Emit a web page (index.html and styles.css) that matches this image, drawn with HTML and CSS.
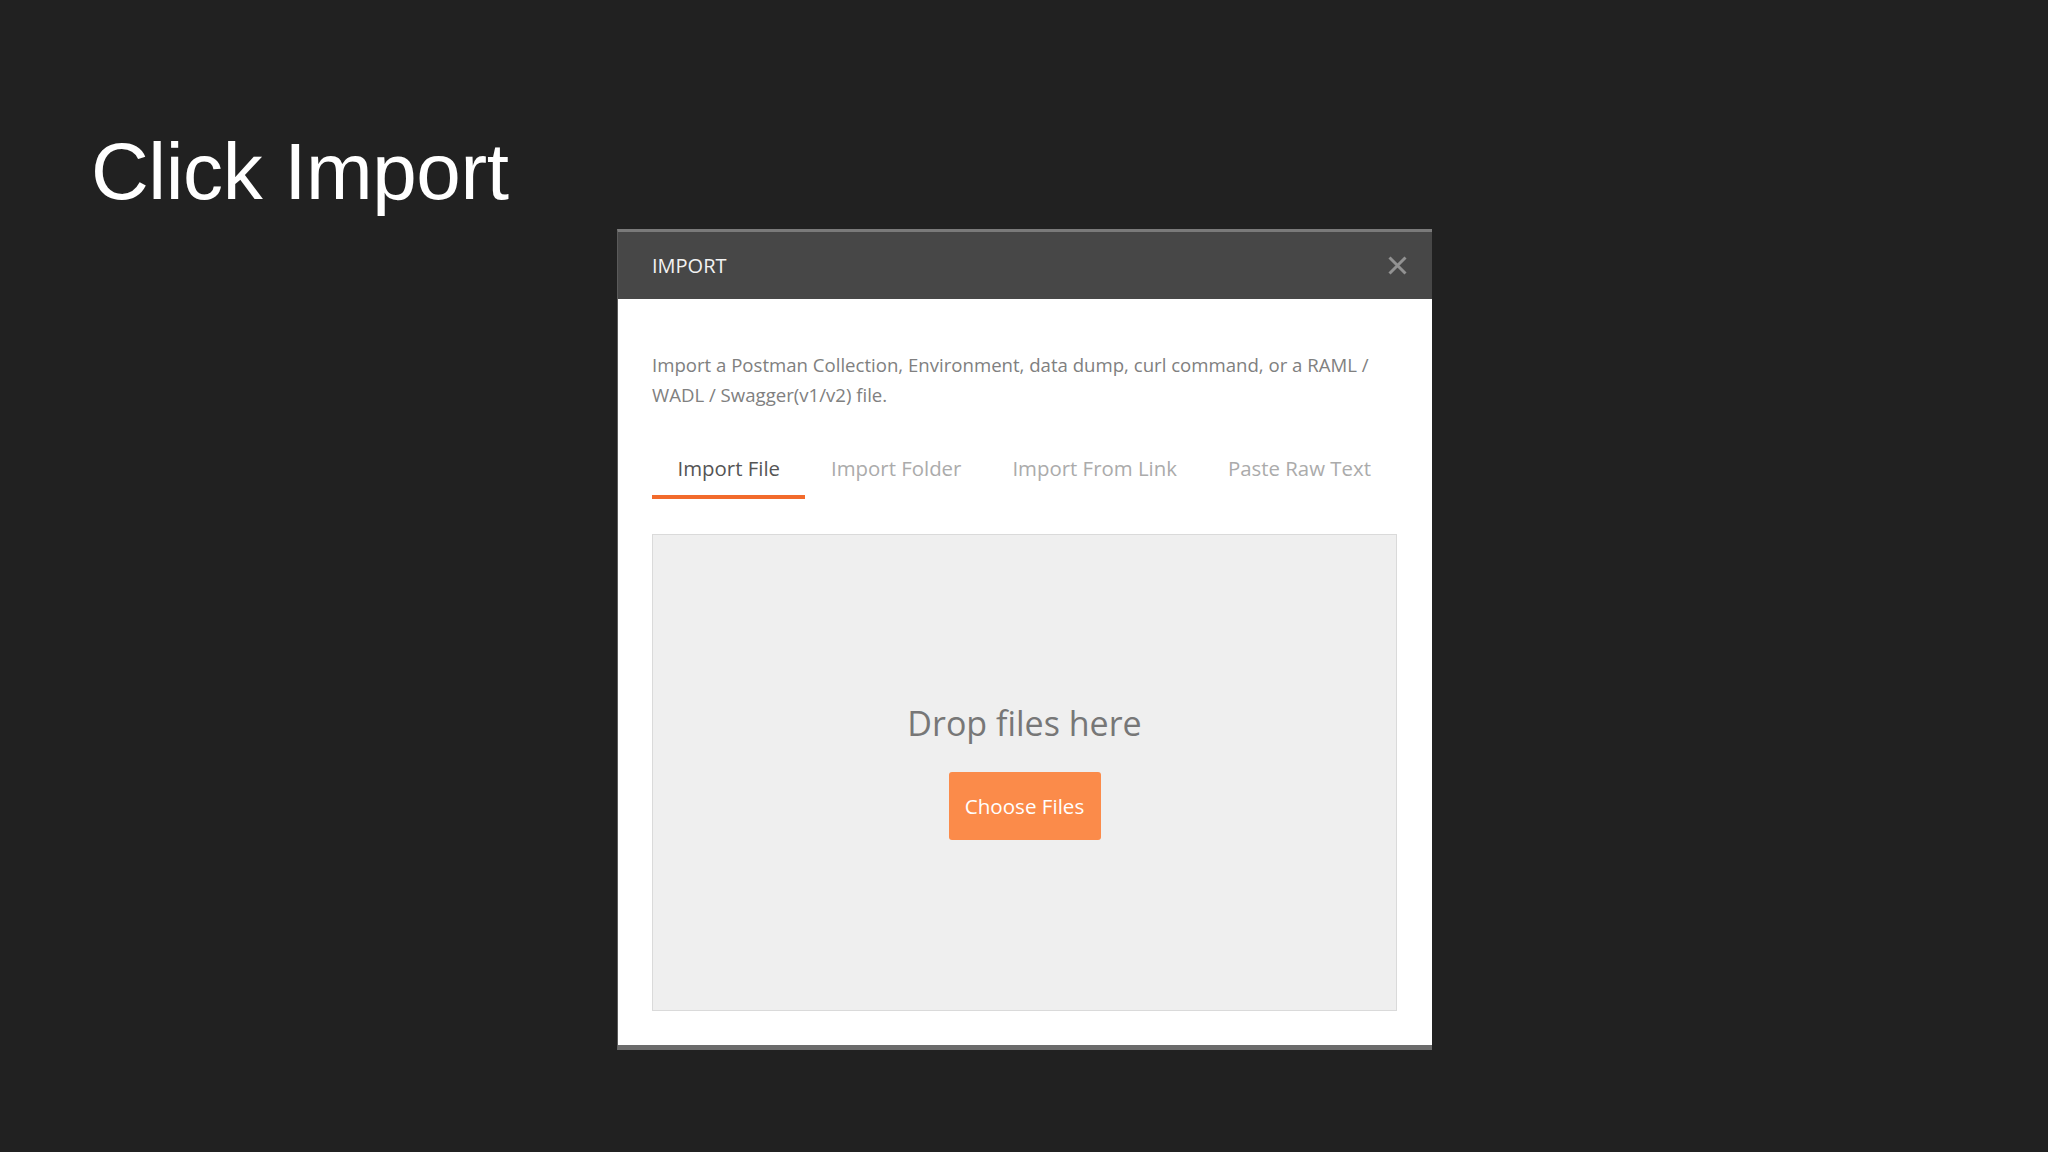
FILE: index.html
```html
<!DOCTYPE html>
<html lang="en">
<head>
<meta charset="utf-8">
<title>Click Import</title>
<link rel="stylesheet" href="styles.css">
</head>
<body>
  <h1 class="slide-title">Click Import</h1>
  <div class="modal">
    <div class="modal-header">
      <span class="modal-title">IMPORT</span>
      <svg class="close-icon" width="19" height="19" viewBox="0 0 19 19" aria-hidden="true">
        <path d="M1.5 1.5 L17.5 17.5 M17.5 1.5 L1.5 17.5" stroke="#929292" stroke-width="3" stroke-linecap="butt"/>
      </svg>
    </div>
    <div class="modal-body">
      <p class="description">Import a Postman Collection, Environment, data dump, curl command, or a RAML / WADL / Swagger(v1/v2) file.</p>
      <div class="tabs">
        <div class="tab tab-active">Import File</div>
        <div class="tab">Import Folder</div>
        <div class="tab">Import From Link</div>
        <div class="tab">Paste Raw Text</div>
      </div>
      <div class="dropzone">
        <div class="drop-text">Drop files here</div>
        <button class="choose-btn">Choose Files</button>
      </div>
    </div>
  </div>
</body>
</html>
```
FILE: styles.css
```css
html, body {
  margin: 0;
  padding: 0;
  background: #212121;
  width: 2048px;
  height: 1152px;
  overflow: hidden;
}

.slide-title {
  margin: 126px 0 0 91px;
  font-family: "Liberation Sans", Arial, sans-serif;
  font-weight: normal;
  font-size: 80px;
  line-height: normal;
  color: #ffffff;
  letter-spacing: -0.4px;
}

.modal {
  margin: 11px 0 0 617px;
  width: 815px;
  box-sizing: border-box;
  background: #ffffff;
  border-left: 1px solid #5a5a5a;
  border-top: 3px solid #7a7a7a;
  border-bottom: 5px solid #6b6b6b;
  font-family: "Open Sans", "Noto Sans", sans-serif;
}

.modal-header {
  height: 67px;
  background: #474747;
  display: flex;
  align-items: center;
  justify-content: space-between;
  padding: 0 25px 0 34px;
}

.modal-title {
  color: #f2f2f2;
  font-size: 20px;
  line-height: normal;
}

.close-icon {
  display: block;
}

.modal-body {
  padding: 51px 35px 34px 34px;
}

.description {
  margin: 0;
  font-size: 18.6px;
  line-height: 30px;
  color: #808080;
}

.tabs {
  display: flex;
  margin-top: 44px;
}

.tab {
  font-size: 20.4px;
  line-height: normal;
  padding: 0 25.5px 13px;
  color: #ababab;
  border-bottom: 4px solid transparent;
}

.tab-active {
  color: #555555;
  border-bottom-color: #f26b2c;
}

.dropzone {
  margin-top: 35px;
  height: 477px;
  box-sizing: border-box;
  border: 1px solid #dadada;
  background: #efefef;
  display: flex;
  flex-direction: column;
  align-items: center;
  justify-content: center;
  padding-bottom: 6px;
}

.drop-text {
  font-size: 34px;
  line-height: normal;
  color: #777777;
}

.choose-btn {
  margin-top: 26px;
  width: 152px;
  height: 68px;
  border: none;
  border-radius: 3px;
  background: #fb8b4a;
  color: #ffffff;
  font-family: "Open Sans", "Noto Sans", sans-serif;
  font-size: 20.6px;
  padding: 0;
}
```
